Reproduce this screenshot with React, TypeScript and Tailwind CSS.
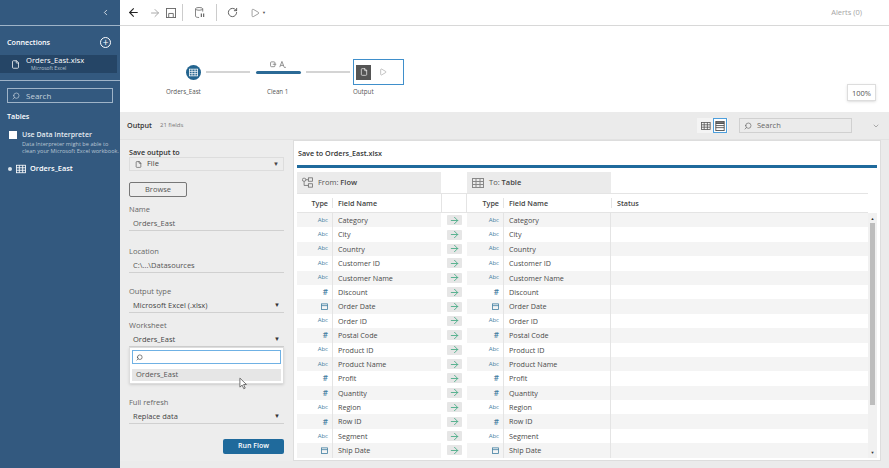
import { ArrowLeft, ArrowRight, ChevronDown, ChevronLeft, File, Play, RotateCw, Search } from "lucide-react";

const fields: [string, string][] = [
  ["abc", "Category"],
  ["abc", "City"],
  ["abc", "Country"],
  ["abc", "Customer ID"],
  ["abc", "Customer Name"],
  ["num", "Discount"],
  ["date", "Order Date"],
  ["abc", "Order ID"],
  ["num", "Postal Code"],
  ["abc", "Product ID"],
  ["abc", "Product Name"],
  ["num", "Profit"],
  ["num", "Quantity"],
  ["abc", "Region"],
  ["num", "Row ID"],
  ["abc", "Segment"],
  ["date", "Ship Date"],
];

function GridIcon({ className }: { className?: string }) {
  return (
    <svg viewBox="0 0 12 12" className={className} fill="none" stroke="currentColor" strokeWidth="1">
      <rect x="0.5" y="1.5" width="11" height="9" />
      <path d="M0.5 4.5h11M0.5 7.5h11M4 1.5v9M8 1.5v9" />
    </svg>
  );
}

function ListIcon({ className }: { className?: string }) {
  return (
    <svg viewBox="0 0 12 12" className={className} fill="none" stroke="currentColor" strokeWidth="1">
      <rect x="1" y="0.5" width="10" height="11" />
      <path d="M1 2.500h10" strokeWidth="2" />
      <path d="M1 5.500h10M1 8h10" />
    </svg>
  );
}

function FlowIcon({ className }: { className?: string }) {
  return (
    <svg viewBox="0 0 13 12" className={className} fill="none" stroke="currentColor" strokeWidth="0.9">
      <rect x="0.5" y="1" width="4" height="3.500" rx="1.500" />
      <rect x="7.500" y="0.500" width="5" height="4" />
      <rect x="7.500" y="7.500" width="5" height="4" />
      <path d="M4.500 2.700h3M2.500 4.500v5h5" />
    </svg>
  );
}

function TypeIcon({ type }: { type: string }) {
  if (type === "abc") return <span className="text-[6px] text-[#3f7d9f]">Abc</span>;
  if (type === "num") return <span className="text-[8px] font-semibold leading-none text-[#3f7d9f]">#</span>;
  return (
    <svg viewBox="0 0 8 8" className="h-[7px] w-[7px] text-[#3f7d9f]" fill="none" stroke="currentColor" strokeWidth="0.9">
      <rect x="0.5" y="1" width="7" height="6.5" />
      <path d="M0.5 3h7" />
    </svg>
  );
}

function Select({ label, value, className }: { label: string; value: string; className?: string }) {
  return (
    <div className={`flex flex-col ${className ?? ""}`}>
      <span className="h-[12px] text-[7.5px] leading-[12px] text-[#666]">{label}</span>
      <div className="mt-[2px] flex h-[14px] items-center justify-between border-b border-[#d0d0d0] pl-1 pr-1 text-[7.5px] text-[#444]">
        <span>{value}</span>
        <span className="text-[6px] text-[#333]">▼</span>
      </div>
    </div>
  );
}

function Field({ label, value, className }: { label: string; value: string; className?: string }) {
  return (
    <div className={`flex flex-col ${className ?? ""}`}>
      <span className="h-[12px] text-[7.5px] leading-[12px] text-[#666]">{label}</span>
      <div className="mt-[2px] flex h-[14px] items-center border-b border-[#d0d0d0] pl-1 text-[7.5px] text-[#555]">{value}</div>
    </div>
  );
}

export default function App() {
  return (
    <div
      className="flex h-[468px] w-[889px] overflow-hidden bg-white text-[#333]"
      style={{ fontFamily: '"Open Sans", "Noto Sans", sans-serif' }}
    >
      {/* Sidebar */}
      <aside className="flex w-[120px] shrink-0 flex-col bg-[#33597f] text-white">
        <div className="flex h-[26px] shrink-0 items-center justify-end border-b border-[#9fb4c8] pr-[10px]">
          <ChevronLeft className="size-[9px]" />
        </div>
        <div className="flex h-[29px] shrink-0 items-center justify-between pl-[7px] pr-[9px] pt-[3px]">
          <span className="text-[7.2px] font-semibold">Connections</span>
          <span className="flex size-[11px] items-center justify-center rounded-full border border-white text-[10px] leading-none">+</span>
        </div>
        <div className="mr-[3px] flex h-[18px] shrink-0 items-center bg-[#254566] pl-[11px]">
          <File className="size-[9px]" />
          <div className="ml-[6px] flex flex-col">
            <span className="text-[7.6px] leading-[9px]">Orders_East.xlsx</span>
            <span className="ml-[5px] text-[5px] leading-[7px] text-[#b7c5d3]">Microsoft Excel</span>
          </div>
        </div>
        <div className="mt-[7px] h-px shrink-0 bg-[#9fb4c8]" />
        <div className="ml-[7px] mt-[7px] flex h-[15px] w-[106px] shrink-0 items-center gap-[6px] border border-[#9fb4c8] pl-[4px]">
          <Search className="size-[8px] -scale-x-100 text-[#c5d1dc]" />
          <span className="text-[8px] text-[#c5d1dc]">Search</span>
        </div>
        <div className="ml-[7px] mt-[7px] h-[12px] text-[7.2px] font-semibold leading-[12px]">Tables</div>
        <div className="ml-[9px] mt-[8px] flex h-[10px] items-center gap-[5px]">
          <span className="size-[8px] bg-white" />
          <span className="text-[7px] font-semibold text-[#e6ecf1]">Use Data Interpreter</span>
        </div>
        <div className="ml-[22px] mt-[1px] text-[5.6px] leading-[7px] whitespace-nowrap text-[#b7c5d3]">
          Data Interpreter might be able to
          <br />
          clean your Microsoft Excel workbook.
        </div>
        <div className="ml-[8px] mt-[8px] flex h-[12px] items-center">
          <span className="size-[4px] rounded-full bg-[#d9e2ea]" />
          <GridIcon className="ml-[4px] size-[10px]" />
          <span className="ml-[4px] text-[7.4px] font-semibold">Orders_East</span>
        </div>
      </aside>

      <main className="flex min-w-0 flex-1 flex-col">
        {/* Toolbar */}
        <div className="flex h-[26px] shrink-0 items-center border-b border-[#d8d8d8] pl-[7px] pr-[27px]">
          <ArrowLeft className="size-[13px] text-[#222]" />
          <ArrowRight className="ml-[9px] size-[12px] text-[#aaa]" />
          <svg viewBox="0 0 11 11" className="ml-[5px] size-[10px] text-[#666]" fill="none" stroke="currentColor">
            <rect x="0.5" y="0.5" width="10" height="10" />
            <path d="M3 10v-4h5v4" />
          </svg>
          <span className="ml-[6px] h-[17px] w-px bg-[#ccc]" />
          <svg viewBox="0 0 11 12" className="ml-[12px] h-[11px] w-[10px] text-[#666]" fill="none" stroke="currentColor" strokeWidth="0.9">
            <ellipse cx="4.5" cy="2" rx="4" ry="1.5" />
            <path d="M0.5 2v8c0 1 2 1.500 4 1.500M8.500 2v3" />
            <path d="M7 7v4M9.500 7v4" strokeWidth="1.300" />
          </svg>
          <span className="ml-[11px] h-[17px] w-px bg-[#ccc]" />
          <RotateCw className="ml-[10px] size-[11px] text-[#555]" />
          <Play className="ml-[12px] size-[10px] text-[#666]" strokeWidth={1.5} />
          <span className="ml-[2px] text-[4px] text-[#555]">▼</span>
          <span className="ml-auto text-[7.5px] text-[#a5a5a5]">Alerts (0)</span>
        </div>

        {/* Canvas */}
        <div className="flex h-[86px] shrink-0 flex-col">
          <div className="ml-[66px] mt-[33px] flex h-[26px] items-center">
            <span className="flex size-[15px] items-center justify-center rounded-full bg-[#23648f] text-white">
              <GridIcon className="size-[9px]" />
            </span>
            <span className="ml-[5px] h-[2px] w-[44px] bg-[#d4d4d4]" />
            <div className="relative ml-[6px] h-[3px] w-[45px] rounded-sm bg-[#2b6a96]">
              <svg viewBox="0 0 18 8" className="absolute -top-[10px] left-[14px] h-[7px] w-[16px] text-[#777]" fill="none" stroke="currentColor" strokeWidth="0.9">
                <rect x="0.5" y="1" width="5" height="5.500" rx="1" />
                <path d="M3 3.700h4M11 7l2.500-6.500L16 7M12 5h3M16 7.500q1 .5 2-.5" />
              </svg>
            </div>
            <span className="ml-[5px] h-[2px] w-[44px] bg-[#d4d4d4]" />
            <div className="ml-[3px] flex h-[26px] w-[51px] items-center border border-[#3f8fcb] pl-[2px]">
              <span className="flex size-[15px] items-center justify-center bg-[#555] text-white">
                <File className="size-[8px]" />
              </span>
              <Play className="ml-[8px] size-[8px] text-[#888]" strokeWidth={1.5} />
            </div>
          </div>
          <div className="relative mt-px h-[12px] text-[6.2px] leading-[12px] text-[#555]">
            <span className="absolute left-[46px]">Orders_East</span>
            <span className="absolute left-[147px]">Clean 1</span>
            <span className="absolute left-[233px]">Output</span>
            <span className="absolute -top-[2px] right-[13px] flex h-[17px] w-[29px] items-center justify-center border border-[#ddd] text-[7.5px] shadow-sm">100%</span>
          </div>
        </div>

        {/* Output panel */}
        <div className="flex min-h-0 flex-1 flex-col bg-[#ebebeb]">
          <div className="flex h-[27px] shrink-0 items-center pl-[7px] pr-[9px]">
            <span className="text-[7.2px] font-semibold">Output</span>
            <span className="ml-[8px] text-[6px] text-[#777]">21 fields</span>
            <span className="ml-auto flex h-[15px] w-[31px] items-center border border-[#f4f4f4] bg-[#f4f4f4]">
              <GridIcon className="ml-[3px] size-[10px] text-[#555]" />
              <span className="ml-[2px] flex size-[15px] items-center justify-center border border-[#4d9fdc] bg-white">
                <ListIcon className="size-[10px] text-[#444]" />
              </span>
            </span>
            <span className="ml-[11px] flex h-[15px] w-[113px] items-center gap-[5px] border border-[#d0d0d0] pl-[4px] text-[7.5px] text-[#666]">
              <Search className="size-[8px] -scale-x-100" />
              Search
            </span>
            <ChevronDown className="ml-[20px] size-[8px] text-[#888]" />
          </div>

          <div className="flex min-h-0 flex-1 border-t border-[#e2e2e2] pb-[7px] pr-[8px]">
            {/* Settings column */}
            <div className="relative flex w-[173px] shrink-0 flex-col bg-[#ededed] pl-[9px] pr-[9px] pt-[6px]">
              <span className="text-[7.2px] font-semibold leading-[12px]">Save output to</span>
              <div className="-mt-px flex h-[14px] shrink-0 items-center justify-between border border-[#ddd] pl-[5px] pr-[4px] text-[7.5px] text-[#444]">
                <span className="flex items-center gap-[5px]">
                  <File className="size-[7px]" />
                  File
                </span>
                <span className="text-[6px]">▼</span>
              </div>
              <button className="mt-[11px] h-[15px] w-[58px] shrink-0 rounded-[2px] border border-[#777] text-[7.5px] text-[#555]">Browse</button>
              <Field className="mt-[6px]" label="Name" value="Orders_East" />
              <Field className="mt-[14px]" label="Location" value="C:\...\Datasources" />
              <Select className="mt-[12px]" label="Output type" value="Microsoft Excel (.xlsx)" />
              <Select className="mt-[6px]" label="Worksheet" value="Orders_East" />
              <div className="relative z-10 flex h-[37px] shrink-0 flex-col border border-[#ddd] bg-white px-[2px] pt-[2px] shadow-sm">
                <div className="flex h-[14px] shrink-0 items-center border border-[#6fb1e4] pl-[3px]">
                  <Search className="size-[7px] -scale-x-100 text-[#333]" />
                </div>
                <div className="mt-[5px] flex h-[12px] shrink-0 items-center bg-[#e6e6e6] pl-[4px] text-[7.5px] text-[#555]">Orders_East</div>
              </div>
              <Select className="mt-[12px]" label="Full refresh" value="Replace data" />
              <button className="mt-[15px] h-[15px] w-[61px] shrink-0 self-end rounded-[2px] bg-[#1f6a9c] text-[7px] font-semibold text-white">Run Flow</button>
              <svg viewBox="0 0 10 14" className="absolute left-[119px] top-[237px] z-20 h-[13px] w-[9px]">
                <path d="M1 1v10l2.500-2.200 1.800 4 1.600-.7-1.800-4h3.200z" fill="#fff" stroke="#555" strokeWidth="0.9" />
              </svg>
            </div>

            {/* Mapping panel */}
            <div className="flex min-w-0 flex-1 flex-col overflow-hidden border border-[#ddd] bg-white pl-[3px] pr-[3px]">
              <div className="flex h-[24px] shrink-0 items-center pl-px text-[7.2px] font-semibold">Save to Orders_East.xlsx</div>
              <div className="h-[3px] shrink-0 bg-[#1f6a9c]" />
              <div className="mt-[4px] flex h-[21px] shrink-0">
                <div className="flex w-[144px] items-center bg-[#ebebeb] pl-[5px] text-[7.5px] text-[#555]">
                  <FlowIcon className="size-[11px] text-[#666]" />
                  <span className="ml-[5px]">
                    From: <span className="font-semibold text-[#444]">Flow</span>
                  </span>
                </div>
                <div className="w-[26px]" />
                <div className="flex w-[144px] items-center bg-[#ebebeb] pl-[5px] text-[7.5px] text-[#555]">
                  <GridIcon className="size-[12px] text-[#888]" />
                  <span className="ml-[5px]">
                    To: <span className="font-semibold text-[#444]">Table</span>
                  </span>
                </div>
              </div>
              <div className="flex min-h-0 flex-1">
                <div className="flex min-w-0 flex-1 flex-col">
                  <div className="flex h-[20px] shrink-0 items-center border-y border-[#e4e4e4] text-[7.2px] font-semibold text-[#444]">
                    <span className="w-[35px] pr-[4px] text-right">Type</span>
                    <span className="w-[109px] border-l border-[#e4e4e4] pl-[5px]">Field Name</span>
                    <span className="w-[26px] self-stretch border-x border-[#e4e4e4]" />
                    <span className="w-[36px] pr-[4px] text-right">Type</span>
                    <span className="w-[108px] border-l border-[#e4e4e4] pl-[5px]">Field Name</span>
                    <span className="flex-1 border-l border-[#e4e4e4] pl-[5px]">Status</span>
                  </div>
                  <div className="min-h-0 flex-1 overflow-hidden">
                    {fields.map(([type, name], i) => (
                      <div key={name} className={`flex h-[14.4px] items-center text-[7.2px] text-[#4a4a4a] ${i % 2 === 0 ? "bg-[#f4f4f4]" : "bg-white"}`}>
                        <span className="flex w-[35px] justify-end pr-[4px]">
                          <TypeIcon type={type} />
                        </span>
                        <span className="w-[109px] self-stretch border-l border-[#e4e4e4] pl-[5px] leading-[14px]">{name}</span>
                        <span className="flex w-[26px] items-center justify-center self-stretch bg-white">
                          <span className="flex h-[10px] w-[15px] items-center justify-center rounded-[1px] bg-[#e6e6e6]">
                            <ArrowRight className="h-[11px] w-[13px] shrink-0 text-[#4fae8a]" />
                          </span>
                        </span>
                        <span className="flex w-[36px] justify-end pr-[4px]">
                          <TypeIcon type={type} />
                        </span>
                        <span className="w-[108px] self-stretch border-x border-[#e4e4e4] pl-[5px] leading-[14px]">{name}</span>
                        <span className="flex-1" />
                      </div>
                    ))}
                  </div>
                </div>
                {/* Scrollbar */}
                <div className="mb-[2px] mt-[20px] flex w-[9px] shrink-0 flex-col items-center bg-[#f1f1f1]">
                  <span className="mt-[3px] text-[4px] leading-[5px] text-[#333]">▲</span>
                  <span className="mt-[2px] h-[182px] w-[5px] bg-[#bdbdbd]" />
                  <span className="mb-[3px] mt-auto text-[4px] leading-[5px] text-[#333]">▼</span>
                </div>
              </div>
            </div>
          </div>
        </div>
      </main>
    </div>
  );
}
